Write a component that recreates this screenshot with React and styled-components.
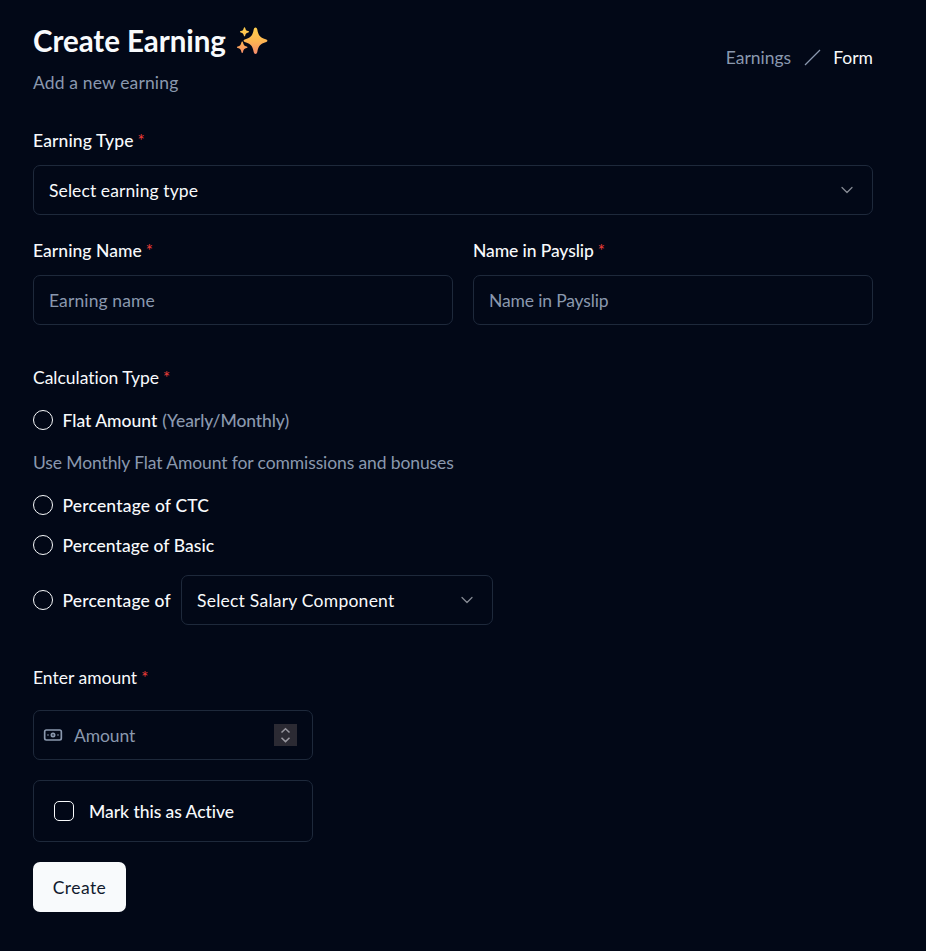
import React from "react";
import styled, { createGlobalStyle } from "styled-components";
import { Banknote, ChevronDown } from "lucide-react";

const color = {
  bg: "#020817",
  fg: "#f8fafc",
  muted: "#8a98ae",
  border: "#1e293b",
  red: "#ef3d38",
};

const GlobalStyle = createGlobalStyle`
  *, *::before, *::after { box-sizing: border-box; }
  html, body { margin: 0; background: #020817; }
  body {
    font-family: Lato, "Open Sans", sans-serif;
    font-size: 17.5px;
    line-height: 25px;
    font-variant-ligatures: none;
    color: #f8fafc;
    -webkit-font-smoothing: antialiased;
  }
  button, input { font: inherit; color: inherit; }
`;

const Page = styled.main`
  width: 926px;
  height: 951px;
  padding: 21px 53px 0 33px;
  background: ${color.bg};
  overflow: hidden;
`;

const Header = styled.header`
  display: flex;
  justify-content: space-between;
  align-items: center;
  height: 75px;
`;

const Title = styled.h1`
  display: flex;
  align-items: center;
  gap: 10px;
  margin: -1px 0 9px;
  font-size: 29.5px;
  line-height: 40px;
  font-weight: 700;
  letter-spacing: -0.05px;
  white-space: nowrap;
`;

const Text = styled.span`
  display: block;
  white-space: nowrap;
  letter-spacing: ${(p) => p.$ls || 0}px;
  color: ${(p) => (p.$muted ? color.muted : "inherit")};
  font-weight: ${(p) => (p.$medium ? 500 : 400)};
`;

const Breadcrumb = styled.nav`
  display: flex;
  align-items: center;
  gap: 12.5px;
  margin-top: -2px;
`;

const Form = styled.form`
  display: flex;
  flex-direction: column;
  align-items: stretch;
`;

const Label = styled.label`
  display: flex;
  gap: 4px;
  height: 25px;
  margin: ${(p) => p.$top || 0}px 0 ${(p) => p.$bottom || 12}px;
`;

const Star = styled.span`
  color: ${color.red};
  font-size: 17px;
`;

const Columns = styled.div`
  display: grid;
  grid-template-columns: 420px 400px;
  gap: 20px;
`;

const Control = styled.div`
  display: flex;
  flex: none;
  align-items: center;
  justify-content: ${(p) => (p.$start ? "flex-start" : "space-between")};
  width: ${(p) => p.$width || "100%"};
  height: ${(p) => p.$height || 50}px;
  padding: ${(p) => p.$pad || "0 15px"};
  border: 1px solid ${color.border};
  border-radius: 7px;
`;

const Chevron = styled(ChevronDown).attrs({ size: 20, strokeWidth: 1.5 })`
  color: #858993;
`;

const Option = styled.div`
  display: flex;
  align-items: center;
  gap: 9.5px;
  height: ${(p) => p.$height || 20}px;
  margin-bottom: ${(p) => p.$bottom || 0}px;
`;

const Radio = styled.span`
  flex: none;
  width: 20px;
  height: 20px;
  border: 1px solid ${color.fg};
  border-radius: 50%;
`;

const OptionText = styled.div`
  display: flex;
  gap: 5px;
  width: ${(p) => p.$width || "auto"};
`;

const MoneyIcon = styled(Banknote).attrs({ size: 20, strokeWidth: 2 })`
  color: ${color.muted};
  margin-right: 11px;
`;

const Spinner = styled.span`
  display: flex;
  align-items: center;
  justify-content: center;
  width: 23px;
  height: 22px;
  margin-left: auto;
  background: #2b2a33;
`;

const Checkbox = styled.span`
  flex: none;
  width: 20px;
  height: 20px;
  margin-right: 15px;
  border: 1px solid ${color.fg};
  border-radius: 5px;
`;

const Submit = styled.button`
  width: 93px;
  height: 50px;
  margin-top: 20px;
  padding: 0;
  border: 0;
  border-radius: 7px;
  background: ${color.fg};
  color: #111a2e;
  letter-spacing: 0.4px;
  text-align: center;
`;

const Sparkles = () => (
  <svg width="33" height="30" viewBox="0 0 33 30" aria-hidden="true">
    <defs>
      <linearGradient id="spark" x1="0" y1="0" x2="0" y2="30" gradientUnits="userSpaceOnUse">
        <stop offset="0" stopColor="#ffd24d" />
        <stop offset="0.5" stopColor="#fdb651" />
        <stop offset="1" stopColor="#f58470" />
      </linearGradient>
    </defs>
    <g fill="url(#spark)">
      <path d="M19.500 1.500c.9 0 1.500.7 1.800 2 1 5.600 2.300 7.800 8.300 9.700 1.200.4 1.800.8 1.800 1.500s-.6 1.100-1.800 1.500c-6 1.900-7.300 4.100-8.300 9.800-.3 1.300-.9 2-1.800 2s-1.500-.7-1.800-2c-1-5.700-2.300-7.900-8.300-9.800-1.200-.4-1.800-.8-1.800-1.500s.6-1.100 1.800-1.500c6-1.900 7.300-4.100 8.300-9.700.3-1.300.9-2 1.800-2z" />
      <path d="M8.500 1.200c.4 0 .6.300.7.800.5 2.100 1 2.600 3 3.100.5.100.8.300.8.700s-.3.600-.8.700c-2 .5-2.500 1-3 3.100-.1.500-.3.800-.7.800s-.6-.3-.7-.8c-.5-2.100-1-2.600-3-3.100-.5-.1-.8-.3-.8-.7s.3-.6.8-.7c2-.5 2.500-1 3-3.100.1-.5.300-.8.700-.8z" />
      <path d="M6.200 15.600c.5 0 .7.400.8.900.6 2.600 1.200 3.300 3.600 3.900.6.200.9.400.9.800s-.3.700-.9.900c-2.400.6-3 1.300-3.600 3.900-.1.500-.3.900-.8.900s-.7-.4-.8-.9c-.6-2.600-1.200-3.300-3.600-3.900-.6-.2-.9-.4-.9-.8s.3-.7.900-.9c2.400-.6 3-1.300 3.600-3.900.1-.5.300-.9.800-.9z" />
    </g>
  </svg>
);

const Slash = () => (
  <svg width="17" height="17" viewBox="0 0 17 17" aria-hidden="true">
    <path d="M1 16 16 1" stroke={color.muted} strokeWidth="1.300" />
  </svg>
);

const SpinArrows = () => (
  <svg width="11" height="16" viewBox="0 0 11 16" fill="none" stroke="#98979f" strokeWidth="1.500" aria-hidden="true">
    <path d="M1.500 5.500 5.500 1.700 9.500 5.500M1.500 10.800 5.500 14.600 9.500 10.800" />
  </svg>
);

const Field = ({ label, ls, medium, top, bottom }) => (
  <Label $top={top} $bottom={bottom}>
    <Text $ls={ls} $medium={medium}>{label}</Text>
    <Star>*</Star>
  </Label>
);

export default function App() {
  return (
    <>
      <GlobalStyle />
      <Page>
        <Header>
          <div>
            <Title>
              Create Earning
              <Sparkles />
            </Title>
            <Text $muted $ls={0.15}>Add a new earning</Text>
          </div>
          <Breadcrumb>
            <Text $muted>Earnings</Text>
            <Slash />
            <Text>Form</Text>
          </Breadcrumb>
        </Header>
        <Form>
          <Field label="Earning Type" medium top={32} ls={0.12} />
          <Control>
            <Text $ls={0.1}>Select earning type</Text>
            <Chevron />
          </Control>
          <Columns>
            <div>
              <Field label="Earning Name" medium top={23} ls={0.05} />
              <Control><Text $muted $ls={0.12}>Earning name</Text></Control>
            </div>
            <div>
              <Field label="Name in Payslip" medium top={23} ls={-0.1} />
              <Control><Text $muted $ls={-0.15}>Name in Payslip</Text></Control>
            </div>
          </Columns>
          <Field label="Calculation Type" top={40} bottom={20} ls={-0.02} />
          <Option $bottom={20}>
            <Radio />
            <OptionText>
              <Text $medium>Flat Amount</Text>
              <Text $muted $medium $ls={-0.1}>(Yearly/Monthly)</Text>
            </OptionText>
          </Option>
          <Option $height={25} $bottom={20}>
            <Text $muted $ls={-0.11}>Use Monthly Flat Amount for commissions and bonuses</Text>
          </Option>
          <Option $bottom={20}>
            <Radio />
            <OptionText><Text $medium $ls={0.18}>Percentage of CTC</Text></OptionText>
          </Option>
          <Option $bottom={20}>
            <Radio />
            <OptionText><Text $medium $ls={0.06}>Percentage of Basic</Text></OptionText>
          </Option>
          <Option $height={50}>
            <Radio />
            <OptionText $width="109px"><Text $medium $ls={0.15}>Percentage of</Text></OptionText>
            <Control $width="312px">
              <Text $ls={0.24}>Select Salary Component</Text>
              <Chevron />
            </Control>
          </Option>
          <Field label="Enter amount" top={40} bottom={20} />
          <Control $width="280px" $pad="0 15px 0 9px">
            <MoneyIcon />
            <Text $muted $ls={-0.1}>Amount</Text>
            <Spinner><SpinArrows /></Spinner>
          </Control>
          <Option $height={20} />
          <Control $width="280px" $height={62} $pad="0 20px" $start>
            <Checkbox />
            <Text $medium $ls={-0.05}>Mark this as Active</Text>
          </Control>
          <Submit type="button">Create</Submit>
        </Form>
      </Page>
    </>
  );
}
